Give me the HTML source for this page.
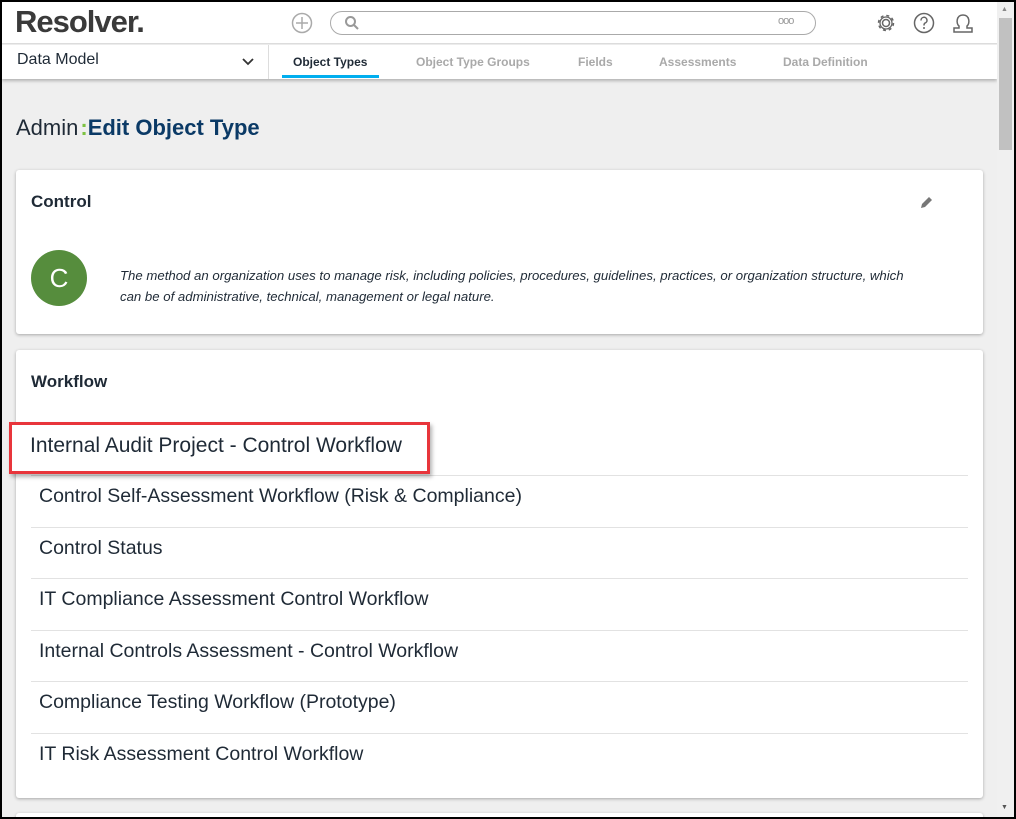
<!DOCTYPE html>
<html><head><style>
*{box-sizing:border-box;margin:0;padding:0}
body{width:1016px;height:819px;overflow:hidden;background:#000;font-family:"Liberation Sans",sans-serif;position:relative}
#page{position:absolute;left:2px;top:2px;width:1012px;height:815px;background:#efefef;overflow:hidden}
.abs{position:absolute}
.hdr{left:0;top:0;width:995px;height:42px;background:#fff;border-bottom:1px solid #ddd}
.nav{left:0;top:43px;width:995px;height:34px;background:#fff;box-shadow:0 2px 3px rgba(0,0,0,.25)}
.tab{position:absolute;top:10px;font-size:12px;color:#a9a9a9;font-weight:bold}
.card{position:absolute;left:14px;width:967px;background:#fff;border-radius:3px;box-shadow:0 1px 3px rgba(0,0,0,.3)}
.row{position:absolute;left:15px;width:937px;height:52px;border-top:1px solid #e2e2e2;font-size:19.5px;color:#1f2a36;padding:9px 0 0 8px}
</style></head><body><div id="page">
<div class="abs hdr">
<div class="abs" style="left:13px;top:2px;font-size:31px;font-weight:bold;color:#3a3a3a;letter-spacing:-1px">Resolver.</div>
<svg class="abs" style="left:289px;top:10px" width="22" height="22"><circle cx="11" cy="11" r="9.5" fill="none" stroke="#aaa" stroke-width="1.5"/><path d="M11 5v12M5 11h12" stroke="#aaa" stroke-width="1.5"/></svg>
<div class="abs" style="left:328px;top:9px;width:486px;height:24px;border:1.5px solid #aaa;border-radius:12px"></div>
<svg class="abs" style="left:342px;top:13px" width="16" height="16"><circle cx="6.5" cy="6.5" r="4.5" fill="none" stroke="#999" stroke-width="2"/><path d="M10 10l4 4" stroke="#999" stroke-width="2"/></svg>
<div class="abs" style="left:776px;top:13px;font-size:11px;color:#999;letter-spacing:-1px">ooo</div>
<svg class="abs" style="left:873px;top:10px" width="22" height="22"><circle cx="11" cy="11" r="3.5" fill="none" stroke="#666" stroke-width="1.5"/><circle cx="11" cy="11" r="7.5" fill="none" stroke="#666" stroke-width="1.5" stroke-dasharray="3 2.9"/><circle cx="11" cy="11" r="6" fill="none" stroke="#666" stroke-width="1.3"/></svg>
<svg class="abs" style="left:911px;top:10px" width="22" height="22"><circle cx="11" cy="11" r="9.5" fill="none" stroke="#666" stroke-width="1.5"/><path d="M8 8.5a3 3 0 1 1 4 2.6c-1 .5-1 1.2-1 2.4" fill="none" stroke="#666" stroke-width="1.5"/><circle cx="11" cy="16" r="1" fill="#666"/></svg>
<svg class="abs" style="left:949px;top:9px" width="24" height="24"><path d="M8 15c-3-2-3-11 4-11s7 9 4 11v2h5v4H3v-4h5z" fill="none" stroke="#666" stroke-width="1.5"/></svg>
</div>
<div class="abs nav">
<div class="abs" style="left:15px;top:6px;font-size:16px;color:#1f2a36">Data Model</div>
<svg class="abs" style="left:240px;top:13px" width="12" height="8"><path d="M1 1l5 5 5-5" fill="none" stroke="#333" stroke-width="1.8"/></svg>
<div class="abs" style="left:266px;top:0;width:1px;height:34px;background:#ddd"></div>
<div class="tab" style="left:291px;color:#1f2a36">Object Types</div>
<div class="abs" style="left:280px;top:30px;width:97px;height:3px;background:#00aeef"></div>
<div class="tab" style="left:414px">Object Type Groups</div>
<div class="tab" style="left:576px">Fields</div>
<div class="tab" style="left:657px">Assessments</div>
<div class="tab" style="left:781px">Data Definition</div>
</div>
<div class="abs" style="left:14px;top:113px;font-size:22px;color:#1f2a36">Admin<span style="color:#7dc242;font-weight:bold;margin-left:2px">:</span><span style="color:#0b3a66;font-weight:bold">Edit Object Type</span></div>
<div class="card" style="top:168px;height:164px">
<div class="abs" style="left:15px;top:22px;font-size:17px;font-weight:bold;color:#1f2a36">Control</div>
<svg class="abs" style="left:903px;top:26px" width="14" height="14"><path d="M2 12l1-4 7-7 3 3-7 7z" fill="#777"/></svg>
<div class="abs" style="left:15px;top:80px;width:56px;height:56px;border-radius:50%;background:#568d3d;color:#fff;font-size:26px;text-align:center;line-height:56px">C</div>
<div class="abs" style="left:104px;top:95px;width:834px;font-size:13.2px;font-style:italic;color:#1f2a36;line-height:21px">The method an organization uses to manage risk, including policies, procedures, guidelines, practices, or organization structure, which<br>can be of administrative, technical, management or legal nature.</div>
</div>
<div class="card" style="top:348px;height:448px">
<div class="abs" style="left:15px;top:22px;font-size:17px;font-weight:bold;color:#1f2a36">Workflow</div>
<div class="row" style="top:125px">Control Self-Assessment Workflow (Risk &amp; Compliance)</div>
<div class="row" style="top:177px">Control Status</div>
<div class="row" style="top:228px">IT Compliance Assessment Control Workflow</div>
<div class="row" style="top:280px">Internal Controls Assessment - Control Workflow</div>
<div class="row" style="top:331px">Compliance Testing Workflow (Prototype)</div>
<div class="row" style="top:383px">IT Risk Assessment Control Workflow</div>
</div>
<div class="abs" style="left:7px;top:420px;width:421px;height:52px;border:3px solid #e8353b;background:#fff;box-shadow:2px 3px 4px rgba(0,0,0,.3);font-size:21px;color:#1f2a36;padding:9px 0 0 18px;white-space:nowrap">Internal Audit Project - Control Workflow</div>
<div class="card" style="top:811px;height:20px"></div>
<div class="abs" style="left:995px;top:0;width:17px;height:815px;background:#f0f0f0"></div>
<div class="abs" style="left:997px;top:16px;width:13px;height:132px;background:#c1c1c1"></div>
<div class="abs" style="left:999px;top:4px;font-size:7px;color:#888">▲</div>
<div class="abs" style="left:999px;top:802px;font-size:7px;color:#555">▼</div>
</div></body></html>
